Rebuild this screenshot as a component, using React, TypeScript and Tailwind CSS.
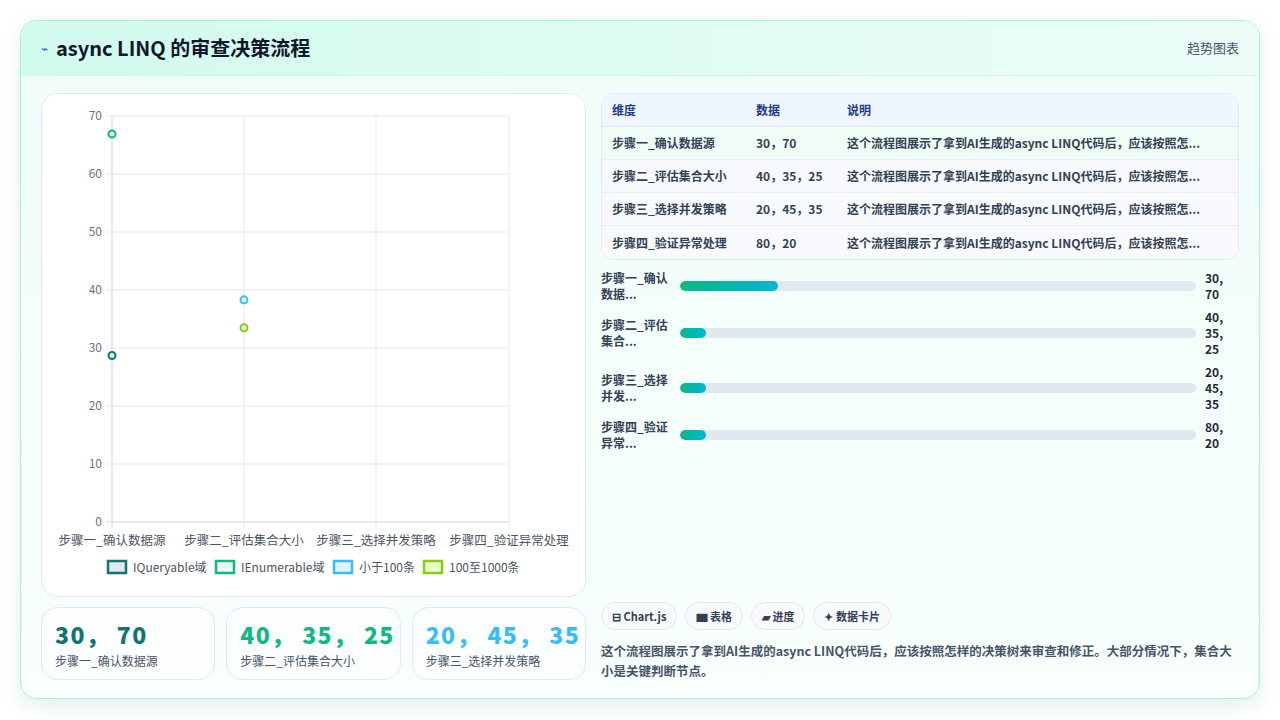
const font = { fontFamily: '"Noto Sans CJK SC", "Noto Sans", sans-serif' };

const rows = [
  { name: "步骤一_确认数据源", data: "30，70", short: ["步骤一_确认", "数据..."], val: ["30,", "70"], pct: 19 },
  { name: "步骤二_评估集合大小", data: "40，35，25", short: ["步骤二_评估", "集合..."], val: ["40,", "35,", "25"], pct: 5 },
  { name: "步骤三_选择并发策略", data: "20，45，35", short: ["步骤三_选择", "并发..."], val: ["20,", "45,", "35"], pct: 5 },
  { name: "步骤四_验证异常处理", data: "80，20", short: ["步骤四_验证", "异常..."], val: ["80,", "20"], pct: 5 },
];

const desc = "这个流程图展示了拿到AI生成的async LINQ代码后，应该按照怎...";

function Chart() {
  const x0 = 70, x1 = 467, y0 = 428, yTop = 22;
  const step = (y0 - yTop) / 7;
  const xs = [70, 202, 334, 467];
  const labels = ["步骤一_确认数据源", "步骤二_评估集合大小", "步骤三_选择并发策略", "步骤四_验证异常处理"];
  const yv = (v: number) => y0 - (v / 10) * step;
  return (
    <svg width="544" height="503" className="block" style={font}>
      {Array.from({ length: 8 }).map((_, i) => (
        <g key={i}>
          <line x1={x0 - 6} x2={x1} y1={y0 - i * step} y2={y0 - i * step} stroke={i === 0 ? "#cbd5e1" : "#e5e7eb"} />
          <text x={x0 - 10} y={y0 - i * step + 4} fontSize="12" fill="#6b7280" textAnchor="end">{i * 10}</text>
        </g>
      ))}
      {xs.map((x, i) => (
        <line key={i} x1={x} x2={x} y1={yTop} y2={y0 + 6} stroke={i === 0 ? "#cbd5e1" : "#e5e7eb"} />
      ))}
      {labels.map((l, i) => (
        <text key={l} x={xs[i]} y={y0 + 23} fontSize="12.5" fill="#4b5563" textAnchor="middle">{l}</text>
      ))}
      <circle cx={70} cy={40} r="3.5" fill="#d1fae5" stroke="#10b981" strokeWidth="2" />
      <circle cx={70} cy={yv(28.7)} r="3.5" fill="#ccfbf1" stroke="#0f766e" strokeWidth="2" />
      <circle cx={202} cy={yv(38.3)} r="3.5" fill="#e0f2fe" stroke="#38bdf8" strokeWidth="2" />
      <circle cx={202} cy={yv(33.5)} r="3.5" fill="#ecfccb" stroke="#84cc16" strokeWidth="2" />
      {[
        { x: 66, c: "#0f766e", f: "#e2e8f0", t: "IQueryable域" },
        { x: 174, c: "#10b981", f: "#ecfdf5", t: "IEnumerable域" },
        { x: 292, c: "#38bdf8", f: "#e0f2fe", t: "小于100条" },
        { x: 382, c: "#84cc16", f: "#ecfccb", t: "100至1000条" },
      ].map((l) => (
        <g key={l.t}>
          <rect x={l.x} y={467} width="18" height="12" fill={l.f} stroke={l.c} strokeWidth="2.5" />
          <text x={l.x + 25} y={478} fontSize="12" fill="#4b5563">{l.t}</text>
        </g>
      ))}
    </svg>
  );
}

export default function App() {
  return (
    <div className="w-[1280px] h-[720px] bg-white p-5" style={font}>
      <div className="h-[679px] rounded-2xl border border-[#a7f3d0] bg-gradient-to-b from-[#f0fdf9] to-[#f8fffd] shadow-[0_6px_20px_rgba(15,118,110,0.12)] overflow-hidden flex flex-col">
        <div className="h-[55px] flex items-center justify-between px-5 bg-gradient-to-r from-[#d1faee] to-[#ecfdf8] border-b border-[#d1f5ea]">
          <div className="flex items-center gap-2">
            <span className="text-[12px] text-[#2563eb]">⌁</span>
            <h1 className="text-[20px] font-bold text-[#0f172a]">async LINQ 的审查决策流程</h1>
          </div>
          <span className="text-[13px] text-[#475569]">趋势图表</span>
        </div>
        <div className="flex-1 grid grid-cols-[545px_1fr] gap-[15px] px-5 pt-[17px] pb-[17px]">
          <div className="flex flex-col gap-[10px]">
            <div className="h-[504px] rounded-2xl border border-[#dbeafe] bg-white overflow-hidden">
              <Chart />
            </div>
            <div className="grid grid-cols-3 gap-[11px]">
              {[
                { v: "30， 70", c: "text-[#0f766e]", l: "步骤一_确认数据源" },
                { v: "40， 35， 25", c: "text-[#10b981]", l: "步骤二_评估集合大小" },
                { v: "20， 45， 35", c: "text-[#38bdf8]", l: "步骤三_选择并发策略" },
              ].map((s) => (
                <div key={s.l} className="h-[73px] rounded-2xl border border-[#dbeafe] bg-[#fbfdff] px-[13px] pt-[12px]">
                  <div className={`text-[23px] leading-[28px] font-extrabold tracking-[0.06em] whitespace-pre ${s.c}`}>{s.v}</div>
                  <div className="text-[12px] text-[#475569] mt-[4px]">{s.l}</div>
                </div>
              ))}
            </div>
          </div>
          <div className="flex flex-col">
            <div className="rounded-xl border border-[#dbeafe] overflow-hidden bg-white">
              <div className="h-[33px] flex items-center bg-[#eff6ff] border-b border-[#dbeafe] text-[12px] font-bold text-[#1e3a8a] px-[10px]">
                <span className="w-[144px]">维度</span><span className="w-[91px]">数据</span><span>说明</span>
              </div>
              {rows.map((r, i) => (
                <div key={r.name} className={`h-[33px] flex items-center text-[12px] font-semibold text-[#334155] px-[10px] ${i < 3 ? "border-b border-[#e5edf7]" : ""} ${i === 0 ? "bg-[#f0fdf6]" : "bg-[#f8fafd]"}`}>
                  <span className="w-[144px]">{r.name}</span><span className="w-[91px]">{r.data}</span><span>{desc}</span>
                </div>
              ))}
            </div>
            <div className="flex flex-col mt-[10px] gap-[7px]">
              {rows.map((r) => (
                <div key={r.name} className="flex items-center">
                  <div className="w-[79px] text-[12px] leading-[16px] font-semibold text-[#334155]">
                    {r.short.map((s) => <div key={s}>{s}</div>)}
                  </div>
                  <div className="flex-1 h-[10px] rounded-full bg-[#e2e8f0] overflow-hidden">
                    <div className="h-full rounded-full bg-gradient-to-r from-[#10b981] to-[#06b6d4]" style={{ width: `${r.pct}%` }} />
                  </div>
                  <div className="w-[43px] pl-[9px] text-[12px] leading-[16px] font-bold text-[#1e293b]">
                    {r.val.map((s, i) => <div key={i}>{s}</div>)}
                  </div>
                </div>
              ))}
            </div>
            <div className="mt-auto">
              <div className="flex gap-[8px]">
                {["⊟ Chart.js", "▆ 表格", "▰ 进度", "✦ 数据卡片"].map((c) => (
                  <span key={c} className="h-[28px] px-[10px] flex items-center rounded-full border border-[#e2e8f0] bg-[#f8fafc] text-[11px] font-semibold text-[#334155]">{c}</span>
                ))}
              </div>
              <p className="mt-[11px] text-[12.5px] leading-[20px] font-semibold text-[#475569]">
                这个流程图展示了拿到AI生成的async LINQ代码后，应该按照怎样的决策树来审查和修正。大部分情况下，集合大小是关键判断节点。
              </p>
            </div>
          </div>
        </div>
      </div>
    </div>
  );
}
